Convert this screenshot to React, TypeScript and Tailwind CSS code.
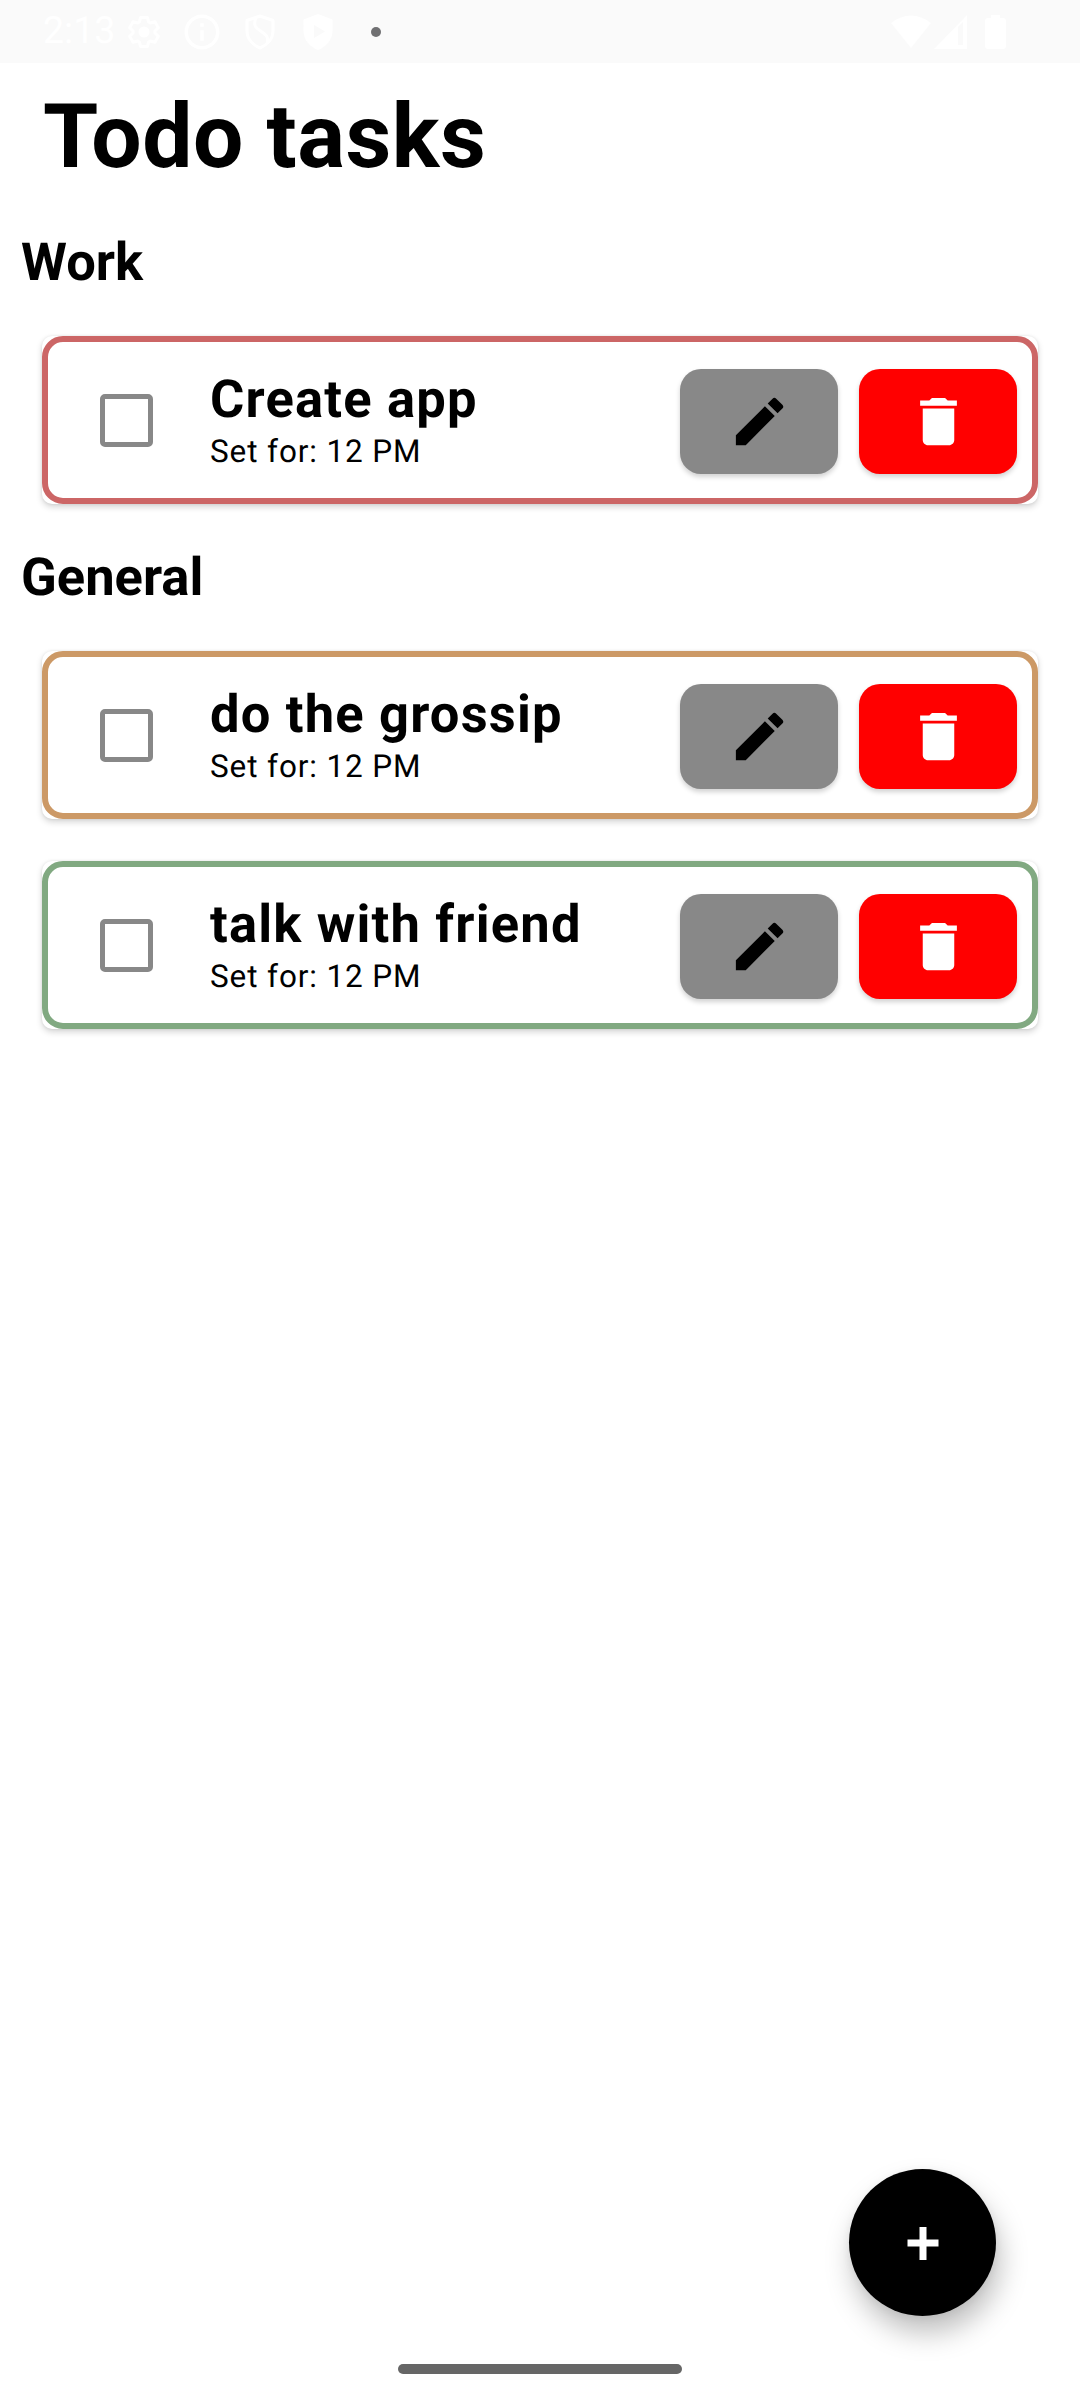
import React from 'react';
import { MdDelete, MdEdit, MdInfoOutline } from 'react-icons/md';

type Task = { title: string; time: string; border: string };
type Section = { name: string; tasks: Task[] };

const sections: Section[] = [
  { name: 'Work', tasks: [{ title: 'Create app', time: 'Set for: 12 PM', border: 'border-[#cc6666]' }] },
  {
    name: 'General',
    tasks: [
      { title: 'do the grossip', time: 'Set for: 12 PM', border: 'border-[#cc9966]' },
      { title: 'talk with friend', time: 'Set for: 12 PM', border: 'border-[#81a981]' },
    ],
  },
];

function StatusBar() {
  return (
    <header className="flex h-[63px] items-center bg-[#fafafa] pl-[43px] pr-[74px] text-white">
      <span className="w-[83px] text-[37.5px] leading-[63px]">2:13</span>
      <svg className="size-[36px] shrink-0" viewBox="-18 -18 36 36" fill="none" stroke="currentColor" strokeWidth="3" strokeLinejoin="round">
        <path d="M-4.600-10-3.400-14.600H3.400L4.600-10 6.360-8.980 10.940-10.240 14.340-4.360 10.960-1.020V1.020L14.340 4.360 10.940 10.240 6.360 8.980 4.600 10 3.400 14.600H-3.400L-4.600 10-6.360 8.980-10.940 10.240-14.340 4.360-10.960 1.020V-1.020L-14.340-4.360-10.940-10.240-6.360-8.980Z" />
        <circle r="5.500" fill="currentColor" stroke="none" />
      </svg>
      <MdInfoOutline className="ml-[19px] size-[42px] shrink-0" />
      <svg className="ml-[19px] size-[36px] shrink-0" viewBox="0 0 36 36" fill="none" stroke="currentColor" strokeWidth="3">
        <path d="M18 2 31 6.500V17C31 25 25 31 18 34 11 31 5 25 5 17V6.500Z" strokeLinejoin="round" />
        <path d="M14 4C10 13 16 15 20 18S27 23 25 29" />
      </svg>
      <svg className="ml-[22px] size-[36px] shrink-0" viewBox="0 0 36 36" fill="currentColor">
        <path fillRule="evenodd" d="M18 0 32.500 5.500V17C32.500 26 26 33 18 36 10 33 3.500 26 3.500 17V5.500ZM14 11V24L25 17.500Z" />
      </svg>
      <span className="ml-[35px] size-[10px] rounded-full bg-[#707072]" />
      <div className="ml-auto flex items-center">
        <svg className="h-[34px] w-[40px]" viewBox="0 0 40 34" fill="currentColor">
          <path d="M0 8Q20-7 40 8L20 33Z" />
        </svg>
        <svg className="ml-[3px] h-[34px] w-[33px]" viewBox="0 0 33 34" fill="currentColor">
          <path fillRule="evenodd" d="M33 0V34H0ZM24 12V30H29V7Z" />
        </svg>
        <svg className="ml-[18px] h-[34px] w-[21px]" viewBox="0 0 21 34" fill="currentColor">
          <path d="M6 0H15V3H18Q21 3 21 6V31Q21 34 18 34H3Q0 34 0 31V6Q0 3 3 3H6Z" />
        </svg>
      </div>
    </header>
  );
}

function TaskCard({ task }: { task: Task }) {
  return (
    <li className="h-[168px] rounded-[10px] bg-white shadow-[0_3px_6px_rgba(0,0,0,0.17),0_0_3px_rgba(0,0,0,0.08)]">
      <div className={`flex h-full items-center rounded-[21px] border-[6px] pl-[52px] pr-[15px] ${task.border}`}>
        <button aria-label="Mark as done" className="mt-px size-[53px] shrink-0 rounded-[5px] border-[5px] border-[#888888]" />
        <div className="ml-[57px] flex-1">
          <h3 className="mt-[-2px] text-[52.5px] leading-[62px] font-bold tracking-[1.18px]">{task.title}</h3>
          <p className="mt-[3px] text-[31.5px] leading-[37px] tracking-[0.88px]">{task.time}</p>
        </div>
        <button
          aria-label="Edit"
          className="mt-[3px] flex h-[105px] w-[158px] items-center justify-center rounded-[21px] bg-[#888888] shadow-[0_3px_5px_rgba(0,0,0,0.18)]"
        >
          <MdEdit className="size-[63px]" />
        </button>
        <button
          aria-label="Delete"
          className="mt-[3px] ml-[21px] flex h-[105px] w-[158px] items-center justify-center rounded-[21px] bg-[#ff0000] text-white shadow-[0_3px_5px_rgba(0,0,0,0.18)]"
        >
          <MdDelete className="size-[63px]" />
        </button>
      </div>
    </li>
  );
}

export default function App() {
  return (
    <div className="relative flex h-[2400px] w-[1080px] flex-col overflow-hidden bg-white font-['Roboto',sans-serif] text-black [text-rendering:geometricPrecision]">
      <StatusBar />
      <h1 className="mt-[21px] ml-[43px] text-[89.25px] leading-[105px] font-bold tracking-[0.5px]">Todo tasks</h1>
      <main className="mt-[42px]">
        {sections.map((section) => (
          <section key={section.name} className="mb-[42px]">
            <h2 className="pl-[21px] text-[52.5px] leading-[62px] font-bold">{section.name}</h2>
            <ul className="mx-[42px] mt-[43px] flex flex-col gap-[42px]">
              {section.tasks.map((task) => (
                <TaskCard key={task.title} task={task} />
              ))}
            </ul>
          </section>
        ))}
      </main>
      <button
        aria-label="Add task"
        className="absolute top-[2169px] left-[849px] flex size-[147px] items-center justify-center rounded-full bg-black text-white shadow-[4px_17px_28px_rgba(0,0,0,0.25),0_2px_8px_rgba(0,0,0,0.06)]"
      >
        <svg className="size-[34px]" viewBox="0 0 34 34" fill="currentColor">
          <path d="M13.500 1H20.500V13.500H32.500V20.500H20.500V34H13.500V20.500H1.500V13.500H13.500Z" />
        </svg>
      </button>
      <div className="absolute top-[2364px] left-[398px] h-[10px] w-[284px] rounded-full bg-[#666666]" />
    </div>
  );
}
